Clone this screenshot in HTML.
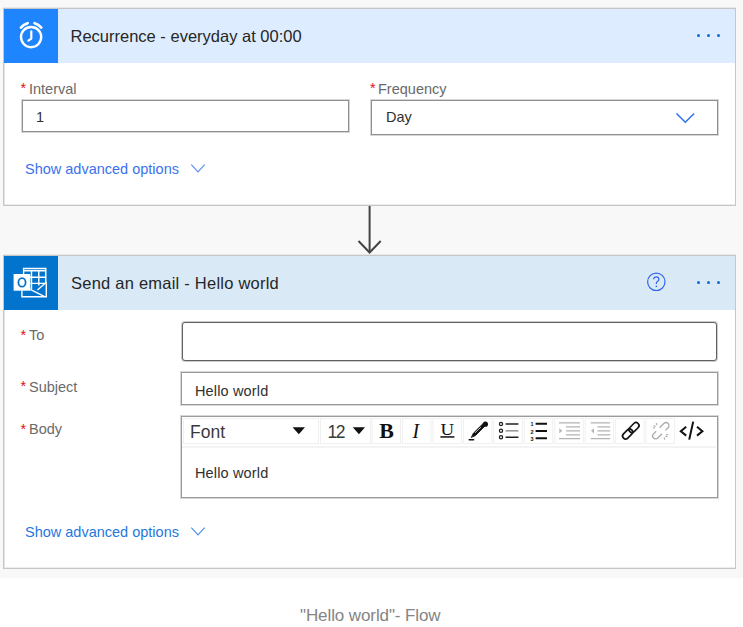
<!DOCTYPE html>
<html><head><meta charset="utf-8">
<style>
*{margin:0;padding:0;box-sizing:border-box}
html,body{width:743px;height:627px;overflow:hidden;background:#fff;font-family:"Liberation Sans",sans-serif}
.bg{position:absolute;left:0;top:0;width:743px;height:578px;background:#f8f8f8}
.abs{position:absolute}
.card{position:absolute;left:3px;width:733px;background:#fff;border:1px solid #c6c6c6;box-shadow:inset 1px 0 0 #e6e6e6,inset 0 -1px 0 #ececec,0 -1px 0 #e8e8e8}
.hdr{position:absolute;left:0;top:0;width:731px;height:54px}
.ico{position:absolute;left:0;top:0;width:54px;height:54px}
.t{position:absolute;white-space:nowrap;line-height:20px}
.title{font-size:16.5px;color:#262626;left:67px}
.lbl{font-size:14.5px;color:#6a6a6a}
.ast{position:absolute;color:#e3101a;font-size:14.5px;line-height:13px}
.inp{position:absolute;background:#fff;border:1px solid #8f8f8f;box-shadow:0 0 0 1px rgba(140,140,140,0.35)}
.val{font-size:14.5px;color:#303030}
.link{font-size:14.5px;color:#3674e6}
.dots{position:absolute;width:3px;height:3px;border-radius:50%;background:#0f6ad6}
.tb{position:absolute;top:1px;height:24px;border:1px solid #ececec;background:#fff}
</style></head><body>
<div class="bg"></div>

<!-- Card 1 -->
<div class="card" style="top:8px;height:198px">
  <div class="hdr" style="background:#ddedff">
    <div class="ico" style="background:#1f85ff">
      <svg style="position:absolute;top:-1px;left:0" width="54" height="54" viewBox="0 0 54 54">
        <circle cx="27.1" cy="29.1" r="10.1" fill="none" stroke="#fff" stroke-width="2.4"/>
        <path d="M27.3 23.3 V30.6 L24.4 32.7" fill="none" stroke="#fff" stroke-width="2.2" stroke-linecap="round" stroke-linejoin="round"/>
        <path d="M16.9 19.6 A14.2 14.2 0 0 1 23.7 15.2" fill="none" stroke="#fff" stroke-width="2.6" stroke-linecap="round"/>
        <path d="M37.3 19.6 A14.2 14.2 0 0 0 30.5 15.2" fill="none" stroke="#fff" stroke-width="2.6" stroke-linecap="round"/>
      </svg>
    </div>
    <div class="t title" style="top:17px;left:66.5px">Recurrence - everyday at 00:00</div>
    <div class="dots" style="left:693px;top:25px"></div>
    <div class="dots" style="left:703px;top:25px"></div>
    <div class="dots" style="left:713px;top:25px"></div>
  </div>
  <div class="ast" style="left:16.5px;top:73px">*</div>
  <div class="t lbl" style="left:25px;top:69.5px">Interval</div>
  <div class="inp" style="left:18px;top:91px;width:327px;height:32px"></div>
  <div class="t val" style="left:32px;top:98px">1</div>

  <div class="ast" style="left:366px;top:73px">*</div>
  <div class="t lbl" style="left:374px;top:69.5px">Frequency</div>
  <div class="inp" style="left:367px;top:91px;width:347px;height:35px"></div>
  <div class="t val" style="left:382px;top:98px">Day</div>
  <svg class="abs" style="left:670px;top:102px" width="24" height="14" viewBox="0 0 24 14">
    <path d="M2.5 2.5 L11.3 11.3 L20.1 2.5" fill="none" stroke="#2f6ff0" stroke-width="1.5"/>
  </svg>

  <div class="t link" style="left:21px;top:149.5px;color:#3a72ee">Show advanced options</div>
  <svg class="abs" style="left:186px;top:154px" width="18" height="12" viewBox="0 0 18 12">
    <path d="M1.3 1.6 L8 8.8 L14.7 1.6" fill="none" stroke="#5d8ff0" stroke-width="1.2"/>
  </svg>
</div>

<!-- Arrow -->
<svg class="abs" style="left:340px;top:205px" width="60" height="52" viewBox="0 0 60 52">
  <path d="M29.6 1 V47.5" stroke="#444" stroke-width="2" fill="none"/>
  <path d="M18.5 36 L29.6 47.5 L40.7 36" stroke="#444" stroke-width="2" fill="none"/>
</svg>

<!-- Card 2 -->
<div class="card" style="top:255px;height:314px">
  <div class="hdr" style="background:#d9eaf6">
    <div class="ico" style="background:#0374ce">
      <svg width="54" height="54" viewBox="0 0 54 54">
        <g fill="none" stroke="#fff" stroke-width="1.4">
          <path d="M19.6 34 V12.5 H41.8 V26.5"/>
          <path d="M19.6 14.8 H41.8 M19.6 21.3 H41.8 M26.5 27.4 H41.8 M27.5 15 V33 M34.8 15 V29.5"/>
          <path d="M17.9 34.5 V40.7 H42.3 V25.8"/>
          <path d="M26.2 33.4 L40.2 40.3 M42.3 26.2 L33.5 34"/>
        </g>
        <rect x="9.6" y="18" width="16.7" height="16.7" fill="#fff"/>
        <ellipse cx="18" cy="26.4" rx="3.6" ry="4.3" fill="none" stroke="#0374ce" stroke-width="1.8"/>
      </svg>
    </div>
    <div class="t title" style="top:17px;letter-spacing:0.23px">Send an email - Hello world</div>
    <svg class="abs" style="left:642px;top:16px" width="21" height="21" viewBox="0 0 21 21">
      <circle cx="10.3" cy="9.8" r="8.7" fill="none" stroke="#3166ee" stroke-width="1.2"/>
      <path d="M7.6 7.3 Q7.8 4.8 10.3 4.8 Q12.9 4.8 12.9 7.2 Q12.9 8.7 11.3 9.6 Q10.3 10.3 10.3 12" fill="none" stroke="#3166ee" stroke-width="1.2"/>
      <circle cx="10.3" cy="14.4" r="0.8" fill="#3166ee"/>
    </svg>
    <div class="dots" style="left:693px;top:25px"></div>
    <div class="dots" style="left:703px;top:25px"></div>
    <div class="dots" style="left:713px;top:25px"></div>
  </div>
  <div class="ast" style="left:16.5px;top:72.5px">*</div>
  <div class="t lbl" style="left:25px;top:68.5px">To</div>
  <div class="inp" style="left:178px;top:66px;width:535px;height:39px;border-color:#5f6163;border-radius:3px;box-shadow:0 0 0 1px rgba(90,90,90,0.3)"></div>

  <div class="ast" style="left:16.5px;top:124px">*</div>
  <div class="t lbl" style="left:25px;top:120.5px">Subject</div>
  <div class="inp" style="left:177px;top:116px;width:537px;height:33px;border-color:#9a9a9a"></div>
  <div class="t val" style="left:191px;top:124.5px;letter-spacing:0.15px">Hello world</div>

  <div class="ast" style="left:16.5px;top:167px">*</div>
  <div class="t lbl" style="left:25px;top:163px">Body</div>
  <div class="inp" style="left:177px;top:160px;width:537px;height:82px;border-color:#9a9a9a">
  </div>
  <div class="t val" style="left:191px;top:207px;letter-spacing:0.15px">Hello world</div>

  <div class="t link" style="left:21px;top:265.5px;color:#1f78dc">Show advanced options</div>
  <svg class="abs" style="left:186px;top:270px" width="18" height="12" viewBox="0 0 18 12">
    <path d="M1.3 1.6 L8 8.8 L14.7 1.6" fill="none" stroke="#4d93e0" stroke-width="1.2"/>
  </svg>
</div>

<div class="t" style="left:300px;top:606px;font-size:17px;color:#858585;letter-spacing:-0.1px">"Hello world"- Flow</div>

<svg class="abs" style="left:0;top:0" width="743" height="627" viewBox="0 0 743 627">
<line x1="182" y1="447" x2="716" y2="447" stroke="#e8e8e8" stroke-width="1"/>
<rect x="183.5" y="418.5" width="135" height="25" fill="#fff" stroke="#f0f0f0"/>
<rect x="320.5" y="418.5" width="50" height="25" fill="#fff" stroke="#f0f0f0"/>
<rect x="372.0" y="418.5" width="28.5" height="25" fill="#fff" stroke="#f0f0f0"/>
<rect x="402.4" y="418.5" width="28.5" height="25" fill="#fff" stroke="#f0f0f0"/>
<rect x="432.9" y="418.5" width="28.5" height="25" fill="#fff" stroke="#f0f0f0"/>
<rect x="463.4" y="418.5" width="28.5" height="25" fill="#fff" stroke="#f0f0f0"/>
<rect x="493.8" y="418.5" width="28.5" height="25" fill="#fff" stroke="#f0f0f0"/>
<rect x="524.2" y="418.5" width="28.5" height="25" fill="#fff" stroke="#f0f0f0"/>
<rect x="554.7" y="418.5" width="28.5" height="25" fill="#fff" stroke="#f0f0f0"/>
<rect x="585.1" y="418.5" width="28.5" height="25" fill="#fff" stroke="#f0f0f0"/>
<rect x="615.6" y="418.5" width="28.5" height="25" fill="#fff" stroke="#f0f0f0"/>
<rect x="646.0" y="418.5" width="28.5" height="25" fill="#fff" stroke="#f0f0f0"/>

<text x="190" y="438" font-family="Liberation Sans" font-size="17.5" textLength="35" fill="#3a3a3a">Font</text>
<path d="M292.6 427.2 H305 L298.8 434.2 Z" fill="#111"/>
<text x="327.4" y="438" font-family="Liberation Sans" font-size="17.5" textLength="18" fill="#3a3a3a">12</text>
<path d="M352.8 427.2 H365 L358.9 434.2 Z" fill="#111"/>
<text x="379.3" y="438" font-family="Liberation Serif" font-weight="bold" font-size="20.5" textLength="14.6" lengthAdjust="spacingAndGlyphs" fill="#111">B</text>
<text x="412.5" y="437.6" font-family="Liberation Serif" font-style="italic" font-size="20" fill="#111">I</text>
<text x="440.6" y="434.6" font-family="Liberation Serif" font-size="16.5" textLength="13.6" lengthAdjust="spacingAndGlyphs" fill="#111">U</text>
<rect x="440.4" y="436.2" width="14" height="1.5" fill="#111"/>
<g stroke="#111" stroke-linecap="round">
  <path d="M471.4 437.2 L473.4 433.2 L482.6 424 L484.8 426.2 L475.6 435.4 Z" fill="#111" stroke-width="0.8" stroke-linejoin="round"/>
  <circle cx="485.4" cy="424.2" r="2.6" fill="#111" stroke="none"/>
  <path d="M475.4 432.6 L480.6 427.4" stroke="#fff" stroke-width="0.7"/>
  <path d="M469.2 439.8 H473.6" stroke-width="1.5"/>
</g>
<g fill="none" stroke="#222">
  <circle cx="501" cy="424" r="1.6" stroke-width="1.3"/>
  <circle cx="501" cy="430.8" r="1.6" stroke-width="1.3"/>
  <circle cx="501" cy="437.2" r="1.6" stroke-width="1.3"/>
  <path d="M505.6 424 H518.4 M505.6 437.2 H518.4" stroke-width="1.6"/>
  <path d="M505.6 430.8 H518.4" stroke="#9a9a9a" stroke-width="1.6"/>
</g>
<g fill="#111" font-family="Liberation Sans" font-weight="bold" font-size="5.5">
  <text x="530.6" y="426.3">1</text><text x="530.6" y="433.5">2</text><text x="530.6" y="440.5">3</text>
</g>
<path d="M535.6 423.8 H547 M535.6 431.1 H547 M535.6 438.3 H547" stroke="#111" stroke-width="2"/>
<g stroke="#b4b4b4" stroke-width="1.3" fill="none">
  <path d="M559 422.8 H580 M566 426.8 H580 M566 430.8 H580 M566 434.8 H580 M559 438.7 H580"/>
  <path d="M590.7 422.8 H610.2 M597.4 426.8 H610.2 M597.4 430.8 H610.2 M597.4 434.8 H610.2 M590.7 438.7 H610.2"/>
</g>
<path d="M559.3 428.2 L562.3 430.8 L559.3 433.4 Z" fill="#b4b4b4"/>
<path d="M594 428.2 L591 430.8 L594 433.4 Z" fill="#b4b4b4"/>
<g fill="none" stroke="#151515" stroke-width="1.7" transform="rotate(-45 630.8 430.8)">
  <rect x="620.5" y="427.8" width="11.6" height="6" rx="3"/>
  <rect x="629.5" y="427.8" width="11.6" height="6" rx="3"/>
</g>
<g fill="none" stroke="#ababab" stroke-width="1.3" transform="rotate(-45 660.8 430.8)">
  <path d="M657.2 427.8 H653.5 A3 3 0 0 0 653.5 433.8 H659.6"/>
  <path d="M664.4 433.8 H668.1 A3 3 0 0 0 668.1 427.8 H662"/>
</g>
<g stroke="#ababab" stroke-width="1.1">
  <path d="M653.6 425.6 L655.6 426.6 M656.2 423 L656.9 425.2 M652.8 427.8 L655 428"/>
  <path d="M667.4 437 L665.4 436 M664.8 439.6 L664.1 437.4 M668.2 434.8 L666 434.6"/>
</g>
<g fill="none" stroke="#111" stroke-width="2">
  <path d="M686.2 426.8 L680.8 431.2 L686.2 435.6"/>
  <path d="M697 426.8 L702.4 431.2 L697 435.6"/>
  <path d="M689.2 439.6 L693.2 421.6"/>
</g>
</svg>
</body></html>
